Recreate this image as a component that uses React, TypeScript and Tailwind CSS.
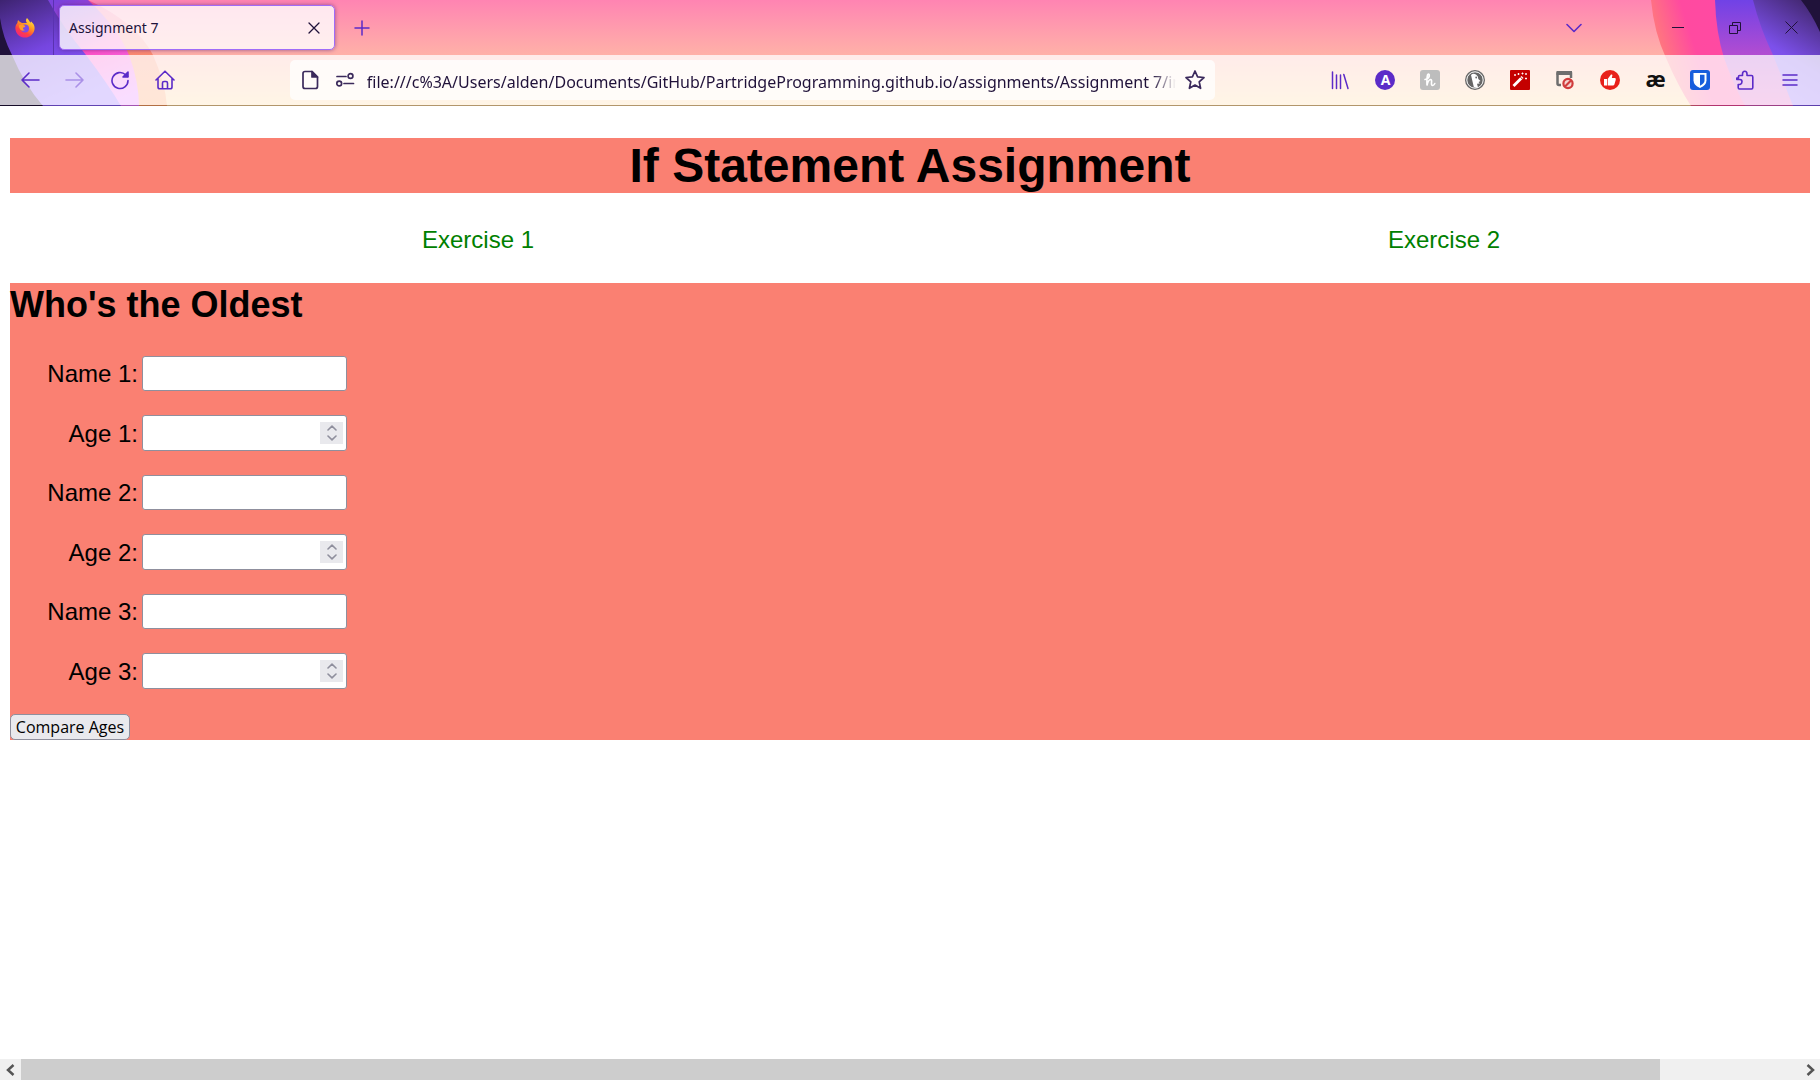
import React from "react";

const URL_TEXT =
  "file:///c%3A/Users/alden/Documents/GitHub/PartridgeProgramming.github.io/assignments/Assignment 7/index.html";

const line = {
  fill: "none",
  stroke: "currentColor",
  strokeWidth: 1.6,
  strokeLinecap: "round" as const,
  strokeLinejoin: "round" as const,
};

function ThemeArt() {
  return (
    <>
      <svg className="absolute top-0 left-0" width="180" height="106" viewBox="0 0 180 106" aria-hidden="true">
        <defs>
          <linearGradient id="lp" x1="0" y1="0" x2="0.5" y2="1">
            <stop offset="0" stopColor="#3d2370" />
            <stop offset="0.5" stopColor="#7646e0" />
            <stop offset="1" stopColor="#8a60ff" />
          </linearGradient>
          <linearGradient id="lm" gradientUnits="userSpaceOnUse" x1="60" y1="0" x2="105" y2="106">
            <stop offset="0" stopColor="#7a42dc" />
            <stop offset="0.2" stopColor="#a244d4" />
            <stop offset="0.5" stopColor="#ff4fc4" />
            <stop offset="1" stopColor="#e878ff" />
          </linearGradient>
          <linearGradient id="lo" x1="0" y1="0" x2="0" y2="1">
            <stop offset="0" stopColor="#fa4f9c" />
            <stop offset="0.5" stopColor="#fb8a70" />
            <stop offset="1" stopColor="#ffa060" />
          </linearGradient>
        </defs>
        <path d="M88 0Q136 22 153 55Q165 82 167 106H0V0Z" fill="url(#lo)" />
        <path d="M88 0Q118 28 129 55Q139 82 139 106H0V0Z" fill="url(#lm)" />
        <path d="M48 0Q62 26 86 55Q108 84 121 106H0V0Z" fill="url(#lp)" />
        <path d="M0 18Q3 38 12 55Q24 84 43 106H0Z" fill="#20123a" />
      </svg>
      <svg className="absolute top-0 right-0" width="180" height="106" viewBox="0 0 180 106" aria-hidden="true">
        <defs>
          <linearGradient id="ro" x1="0" y1="0.6" x2="1" y2="0.4">
            <stop offset="0" stopColor="#ff8a70" />
            <stop offset="0.28" stopColor="#ff4aa0" />
            <stop offset="1" stopColor="#ff4aa8" />
          </linearGradient>
          <linearGradient id="rp" x1="0" y1="0" x2="0" y2="1">
            <stop offset="0" stopColor="#7042e6" />
            <stop offset="0.5" stopColor="#b04cd2" />
            <stop offset="1" stopColor="#e05cc0" />
          </linearGradient>
          <linearGradient id="rd" x1="0.8" y1="0" x2="0.4" y2="1">
            <stop offset="0" stopColor="#42276f" />
            <stop offset="0.55" stopColor="#7c50ea" />
            <stop offset="1" stopColor="#8c62ff" />
          </linearGradient>
        </defs>
        <path d="M11 0Q14 32 26 58Q38 86 51 106H180V0Z" fill="url(#ro)" />
        <path d="M75 0Q76 32 84 58Q94 86 105 106H180V0Z" fill="url(#rp)" />
        <path d="M113 0Q120 28 133 55L153 106H180V0Z" fill="url(#rd)" />
        <path d="M161 0Q172 14 180 32V0Z" fill="#20123a" />
      </svg>
    </>
  );
}

function Firefox() {
  return (
    <svg width="20" height="20" viewBox="0 0 20 20" aria-hidden="true">
      <defs>
        <linearGradient id="ff" x1="0.85" y1="0" x2="0.25" y2="1">
          <stop offset="0" stopColor="#fff04a" />
          <stop offset="0.4" stopColor="#ff9a20" />
          <stop offset="0.7" stopColor="#ff4040" />
          <stop offset="1" stopColor="#f0208a" />
        </linearGradient>
      </defs>
      <path d="M12 0C10.500 1.800 10.800 3.600 12 5L7 5C5 4 3.500 2.800 3.200 2C2.500 3 2.500 4 2.400 5C.8 6.500 .2 8.700 .4 11C.9 16 5 19.600 10 19.600C15.400 19.600 19.600 15.300 19.600 10C19.600 7.500 18.500 5.500 17 4.500C17 4 16.500 3.600 16 3.500C16 4 15.500 4.500 15.200 4.500C14.500 2.600 13 1.500 12 0Z" fill="url(#ff)" />
      <circle cx="10" cy="10.500" r="4" fill="#7a4be8" />
      <path d="M4 7.500C6 6 8 6.500 9.500 7.500C11 8 10 9.200 8.500 9.500C7.500 10 8 12 10 12C6.500 14 4 11 4 7.500Z" fill="#ff9a2a" />
    </svg>
  );
}

function IconButton({
  label,
  children,
  className = "",
}: {
  label: string;
  children: React.ReactNode;
  className?: string;
}) {
  return (
    <button type="button" aria-label={label} className={`flex h-10 w-[45px] shrink-0 items-center justify-center text-[#5b2bc8] ${className}`}>
      {children}
    </button>
  );
}

function TabStrip() {
  return (
    <div className="flex h-[55px] items-stretch">
      <button type="button" aria-label="Firefox View" className="flex w-[54px] shrink-0 items-center justify-center border-r border-[#5a32b0] pr-1">
        <Firefox />
      </button>
      <div className="my-[5px] ml-[5px] flex w-[276px] items-center justify-between rounded-[5px] border border-[#a06cf8] bg-white/80 pr-2 pl-[9px] shadow-[0_0_4px_rgba(80,30,120,0.6)]">
        <button type="button" className="text-[15px] leading-5 text-[#20123a] font-['Noto_Sans',sans-serif]"><span className="text-[14px]">Assignment 7</span></button>
        <button type="button" aria-label="Close tab" className="flex size-6 items-center justify-center text-[#20123a]">
          <svg width="12" height="12" viewBox="0 0 12 12" {...line} strokeWidth={1.3}><path d="M1 1L11 11M11 1L1 11" /></svg>
        </button>
      </div>
      <button type="button" aria-label="New tab" className="flex w-[54px] items-center justify-center text-[#5b2bc8]">
        <svg width="16" height="16" viewBox="0 0 16 16" {...line} strokeWidth={1.5}><path d="M8 1V15M1 8H15" /></svg>
      </button>
      <div className="flex-1" />
      <button type="button" aria-label="List all tabs" className="mr-[53px] flex w-[45px] items-center justify-center text-[#5b2bc8]">
        <svg width="16" height="10" viewBox="0 0 16 10" {...line}><path d="M1 1.500L8 8.500L15 1.500" /></svg>
      </button>
      <button type="button" aria-label="Minimize" className="flex w-[57px] items-center justify-center text-[#20123a]">
        <svg width="12" height="12" viewBox="0 0 12 12"><path d="M0 5.500H12" stroke="currentColor" /></svg>
      </button>
      <button type="button" aria-label="Restore" className="flex w-[57px] items-center justify-center text-[#20123a]">
        <svg width="12" height="12" viewBox="0 0 12 12" fill="none" stroke="currentColor"><path d="M.5 3.500H8.500V11.500H.5ZM3.500 3.500V.5H11.500V8.500H8.500" /></svg>
      </button>
      <button type="button" aria-label="Close window" className="flex w-[57px] items-center justify-center text-[#20123a]">
        <svg width="13" height="13" viewBox="0 0 13 13" stroke="currentColor"><path d="M.5 .5L12.500 12.500M12.500 .5L.5 12.500" /></svg>
      </button>
    </div>
  );
}

function AddressBar() {
  return (
    <div className="flex h-10 items-center rounded-[5px] bg-white/75 pr-[9px] pl-[11px] text-[#3b2a5c]">
      <button type="button" aria-label="Local file" className="flex shrink-0">
        <svg width="18" height="20" viewBox="0 0 18 20" {...line} strokeWidth={1.7}>
          <path d="M4 1.500H11L16.500 7V16.500Q16.500 18.500 14.500 18.500H4Q2 18.500 2 16.500V3.500Q2 1.500 4 1.500Z" />
          <path d="M11 1.500V7H16.500Z" fill="currentColor" />
        </svg>
      </button>
      <button type="button" aria-label="Site permissions" className="ml-4 flex shrink-0">
        <svg width="20" height="18" viewBox="0 0 20 18" {...line} strokeWidth={1.7}>
          <path d="M2 5.500H11M9 12.500H18.500" /><circle cx="15.500" cy="5" r="2.400" /><circle cx="4.200" cy="12.500" r="2.400" />
        </svg>
      </button>
      <input
        aria-label="Address"
        defaultValue={URL_TEXT}
        className="ml-[12px] min-w-0 flex-1 bg-transparent pt-[3px] font-['Noto_Sans',sans-serif] text-[16px] leading-6 text-[#20123a] outline-none [mask-image:linear-gradient(to_left,transparent,black_24px)]"
      />
      <button type="button" aria-label="Bookmark this page" className="ml-2 flex shrink-0">
        <svg width="22" height="22" viewBox="0 0 22 22" {...line} strokeWidth={1.7}>
          <path d="M11 2L13.600 7.900L20 8.500L15.200 12.800L16.600 19.300L11 16L5.400 19.300L6.800 12.800L2 8.500L8.400 7.900Z" />
        </svg>
      </button>
    </div>
  );
}

function Toolbar() {
  return (
    <div className="flex h-[51px] items-center border-b border-black/30 bg-white/75 bg-clip-padding px-[7px]">
      <IconButton label="Back">
        <svg width="20" height="18" viewBox="0 0 20 18" {...line}><path d="M19 9H2M9 2L2 9L9 16" /></svg>
      </IconButton>
      <IconButton label="Forward" className="opacity-40">
        <svg width="20" height="18" viewBox="0 0 20 18" {...line}><path d="M1 9H18M11 2L18 9L11 16" /></svg>
      </IconButton>
      <IconButton label="Reload">
        <svg width="20" height="20" viewBox="0 0 20 20" {...line}><path d="M18 10.500A8 8 0 1 1 15.600 4.800L17.500 6.500" /><path d="M18 2V7H13Z" fill="currentColor" /></svg>
      </IconButton>
      <IconButton label="Home">
        <svg width="20" height="20" viewBox="0 0 20 20" {...line}><path d="M1 10L10 1.200L19 10M3 8.500V17Q3 18.800 4.800 18.800H15.200Q17 18.800 17 17V8.500M7.500 18.500V13Q7.500 11.500 9 11.500H11Q12.500 11.500 12.500 13V18.500" /></svg>
      </IconButton>
      <div className="flex-1" />
      <div className="min-w-0 flex-9">
        <AddressBar />
      </div>
      <div className="flex-1" />
      <IconButton label="Library">
        <svg width="18" height="20" viewBox="0 0 18 20" {...line} strokeWidth={1.5}><path d="M1.500 2V18.500M5.500 5V18.500M9.500 5V18.500M12.800 4.500L17 18.500" /></svg>
      </IconButton>
      <IconButton label="Account">
        <span className="flex size-5 items-center justify-center rounded-full bg-[#5b2bc8] text-[14px] leading-5 font-bold text-white">A</span>
      </IconButton>
      <IconButton label="Honey">
        <svg width="20" height="20" viewBox="0 0 20 20"><rect width="20" height="20" rx="3" fill="#bdbdbd" /><path d="M5 9.500Q9.500 8.500 9.300 5Q8.800 3 7.600 4.800Q6.600 8 7 15.500Q8 10 10.500 9.500Q12 9.500 11.500 12.500Q11.200 15.500 12.600 15.500Q13.800 15.500 14.800 13.500" fill="none" stroke="#fff" strokeWidth="1.600" strokeLinecap="round" /></svg>
      </IconButton>
      <IconButton label="DuckDuckGo">
        <svg width="20" height="20" viewBox="0 0 20 20"><circle cx="10" cy="10" r="10" fill="#666" /><circle cx="10" cy="10" r="8.200" fill="none" stroke="#fff" strokeWidth="1" /><path d="M6 5Q8 3 11 4.500Q13.500 6 13.300 9L15.500 11L13.500 12L14.800 13.500L12 13.800L13 17.500Q10.500 18 8.800 17Z" fill="#fff" /><circle cx="11.200" cy="7.500" r=".9" fill="#666" /></svg>
      </IconButton>
      <IconButton label="Page tools">
        <svg width="20" height="20" viewBox="0 0 20 20"><rect width="20" height="20" rx="1" fill="#c40000" /><path d="M3.500 16L12.500 7" stroke="#fff" strokeWidth="2.800" /><path d="M10.500 7.200L12.500 9.200" stroke="#c40000" strokeWidth="1" /><path d="M5 4V6M4 5H6M8.500 3V5M7.500 4H9.500M12.500 2.500V4.500M11.500 3.500H13.500M16 3V5M15 4H17M16 7.500V9.500M15 8.500H17" stroke="#fff" strokeWidth=".9" /></svg>
      </IconButton>
      <IconButton label="Popup blocker">
        <svg width="20" height="20" viewBox="0 0 20 20"><path d="M6 15H4Q2.500 15 2.500 13.500V3.500H16V8" fill="none" stroke="#6e6e6e" strokeWidth="2.500" /><path d="M1.500 3H17" stroke="#6e6e6e" strokeWidth="4" /><circle cx="13" cy="13.500" r="4.600" fill="#f4d4d0" stroke="#d03c3c" strokeWidth="2.200" /><path d="M10 16.500L16 10.500" stroke="#d03c3c" strokeWidth="2.200" /></svg>
      </IconButton>
      <IconButton label="Likes">
        <svg width="20" height="20" viewBox="0 0 20 20"><circle cx="10" cy="10" r="10" fill="#e8201a" /><path d="M4 9H7V15.500H4ZM7.700 9L11 4.500Q12.500 4 12.400 5.500L11.800 8H15Q16.300 8.500 15.700 10L14.400 14.500Q14 15.500 13 15.500H7.700Z" fill="#fff" /></svg>
      </IconButton>
      <IconButton label="Grammar">
        <span className="flex h-5 items-center pb-1 font-['Noto_Sans',sans-serif] text-[22px] leading-5 font-bold text-[#111]">æ</span>
      </IconButton>
      <IconButton label="Bitwarden">
        <svg width="20" height="20" viewBox="0 0 20 20"><rect width="20" height="20" rx="3" fill="#175ddc" /><path d="M3.500 3H16.500V10.500Q16.500 15 10 18Q3.500 15 3.500 10.500Z" fill="#fff" /><path d="M10 4.800H14.500V10.500Q14.500 13.500 10 15.800Z" fill="#175ddc" /></svg>
      </IconButton>
      <IconButton label="Extensions">
        <svg width="20" height="20" viewBox="0 0 20 20" {...line}><path d="M3.500 8V6.500Q3.500 5.500 4.500 5.500H7.500V4Q7.500 1.200 9.800 1.200Q12 1.200 12 4V5.500H16.500Q17.800 5.500 17.800 7V17.500Q17.800 19 16.500 19H4.500Q3.200 19 3.200 17.500V14.500H5Q7 14 7 11.800Q7 9.500 5 9.500H1.800V8Z" /></svg>
      </IconButton>
      <IconButton label="Open menu">
        <svg width="16" height="14" viewBox="0 0 16 14" {...line} strokeWidth={1.5}><path d="M1 2H15M1 7H15M1 12H15" /></svg>
      </IconButton>
    </div>
  );
}

function Field({ id, label, numeric = false }: { id: string; label: string; numeric?: boolean }) {
  return (
    <div className={`flex items-center gap-1 ${numeric ? "h-9" : "h-[35px]"}`}>
      <label htmlFor={id} className="w-32 text-right text-[24px] leading-[27px]">{label}</label>
      <div className="flex h-full w-[205px] items-center rounded-[3px] border border-[#8f8f9d] bg-white pr-[3px]">
        <input
          id={id}
          type={numeric ? "number" : "text"}
          className="h-full min-w-0 flex-1 px-1 text-[20px] outline-none [appearance:textfield] [&::-webkit-inner-spin-button]:appearance-none"
        />
        {numeric && (
          <div className="flex h-[22px] w-[23px] flex-col items-center justify-center gap-1 bg-[#e9e9ed] text-[#8f8f9d]">
            <button type="button" aria-label={`Increase ${label}`} className="flex">
              <svg width="10" height="6" viewBox="0 0 10 6" {...line}><path d="M1 5L5 1.200L9 5" /></svg>
            </button>
            <button type="button" aria-label={`Decrease ${label}`} className="flex">
              <svg width="10" height="6" viewBox="0 0 10 6" {...line}><path d="M1 1L5 4.800L9 1" /></svg>
            </button>
          </div>
        )}
      </div>
    </div>
  );
}

function ScrollBar() {
  return (
    <div className="flex h-[21px] bg-[#f0f0f0] text-[#555]">
      <button type="button" aria-label="Scroll left" className="flex w-[21px] items-center justify-center">
        <svg width="10" height="12" viewBox="0 0 10 12" fill="none" stroke="currentColor" strokeWidth="2.500"><path d="M7.500 1L2 6L7.500 11" /></svg>
      </button>
      <div className="flex-1">
        <div className="h-full w-[92.2%] bg-[#cdcdcd]" />
      </div>
      <button type="button" aria-label="Scroll right" className="flex w-[21px] items-center justify-center">
        <svg width="10" height="12" viewBox="0 0 10 12" fill="none" stroke="currentColor" strokeWidth="2.500"><path d="M2.500 1L8 6L2.500 11" /></svg>
      </button>
    </div>
  );
}

export default function App() {
  return (
    <div className="flex min-h-screen flex-col bg-white">
      <header className="relative bg-linear-to-b from-[#ff84b2] to-[#ffd79a] font-['Open_Sans',sans-serif]">
        <ThemeArt />
        <div className="relative">
          <TabStrip />
          <Toolbar />
        </div>
      </header>
      <main className="flex-1 overflow-hidden px-[10px] pt-8 font-['Liberation_Sans',Arial,sans-serif] text-black">
        <h1 className="bg-[#fa8072] text-center text-[48px] leading-[55px] font-bold">If Statement Assignment</h1>
        <nav className="mt-[33px] grid grid-cols-[52%_52%] gap-[30px] text-center text-[24px] leading-7 text-[#008000]">
          <div><a href="#exercise-1">Exercise 1</a></div>
          <div><a href="#exercise-2">Exercise 2</a></div>
        </nav>
        <section id="exercise-1" className="mt-[29px] bg-[#fa8072]">
          <h2 className="text-[36px] leading-[44px] font-bold">Who's the Oldest</h2>
          <form className="mt-[29px]" onSubmit={(e) => e.preventDefault()}>
            <div className="flex flex-col gap-6">
              <Field id="name1" label="Name 1:" />
              <Field id="age1" label="Age 1:" numeric />
              <Field id="name2" label="Name 2:" />
              <Field id="age2" label="Age 2:" numeric />
              <Field id="name3" label="Name 3:" />
              <Field id="age3" label="Age 3:" numeric />
            </div>
            <button type="submit" className="mt-[25px] flex h-[26px] w-[120px] items-center justify-center rounded-[5px] border border-[#8f8f9d] bg-[#e9e9ed] font-['Open_Sans',sans-serif] text-[16px] leading-5 whitespace-nowrap">
              Compare Ages
            </button>
          </form>
        </section>
      </main>
      <ScrollBar />
    </div>
  );
}
